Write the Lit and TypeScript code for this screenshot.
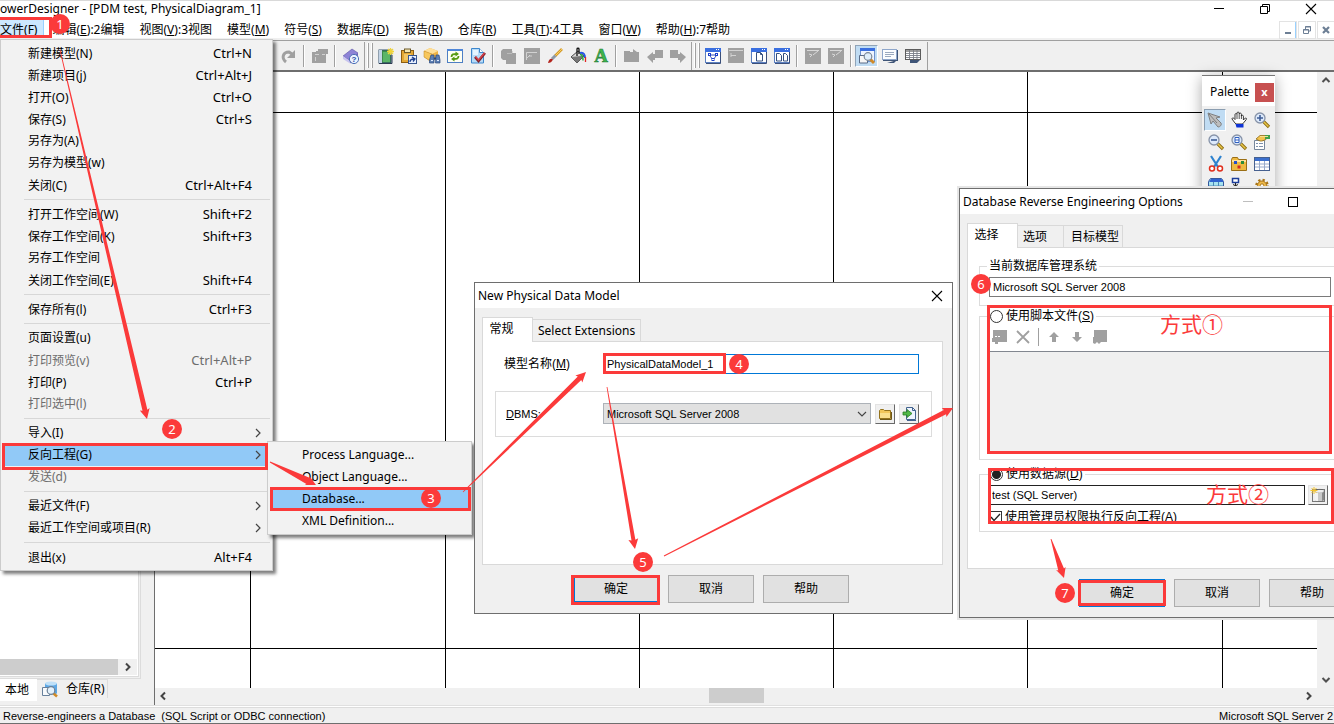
import { LitElement, html, svg, css, nothing } from "lit";
import { customElement } from "lit/decorators.js";
import { classMap } from "lit/directives/class-map.js";

/* ---------- icon drawings, all on a 16 x 16 grid ---------- */
const G = "#a0a0a0";
const windowFrame = svg`<rect x="0.5" y="0.5" width="15" height="14" fill="#fff" stroke="#5b7fc0"/><rect x="0" y="0" width="16" height="4" fill="#3a6fe0"/><rect x="11" y="1" width="1" height="1" fill="#fff"/><rect x="13" y="1" width="1" height="1" fill="#fff"/><path d="M15.5 4v11.5H1" fill="none" stroke="#3a4f7a"/>`;
const lens = (x: number, y: number) => svg`<path d="M${x + 3} ${y + 3}l6 6" stroke="#8a6a10" stroke-width="3.200"/><path d="M${x + 3} ${y + 3}l5.500 5.500" stroke="#e8c64a" stroke-width="1.500"/><circle cx="${x}" cy="${y}" r="5" fill="#dce9fb" stroke="#8793a8" stroke-width="1.300"/>`;
const cylinderStar = svg`<path d="M5 4v9c0 2 9 2 9 0V4z" fill="#c9c9c9"/><path d="M5 4v9c1 1 2 1.300 3 1.400V4z" fill="#f4f4f4"/><path d="M12 4v10c1-.2 2-.5 2-1V4z" fill="#8a8a8a"/><ellipse cx="9.500" cy="4" rx="4.500" ry="1.800" fill="#eee" stroke="#aaa" stroke-width=".5"/><rect x="2.500" y="2.500" width="12" height="12" fill="none" stroke="#000" stroke-dasharray="1 1"/><path d="M4 0v7M.5 3.500h7M1.500 1l5 5M6.500 1l-5 5" stroke="#f4c430"/>`;

const ICONS: Record<string, unknown> = {
  redo: svg`<path d="M5 14C0 10 2 4 8 4l3 2" fill="none" stroke="${G}" stroke-width="3"/><path d="M14 2v8H6z" fill="${G}"/>`,
  pasteOff: svg`<path d="M0 4h4V3h2V1h10v5h-2v9H0z" fill="${G}"/><path d="M3 6.500h4M3.500 9v4M10 6.500h3" stroke="#d0d0d0"/>`,
  help: svg`<path d="M0 8L9 1l6 4-8 8z" fill="#8d83d6" stroke="#5c53a5" stroke-width=".6"/><path d="M0 8l7 5v2.500L0 11z" fill="#c9c4ef"/><path d="M7 13l8-8v3l-8 7.500z" fill="#6d63bd"/><circle cx="11" cy="11" r="4.600" fill="#eaf2ff" stroke="#4e6fb5"/><text x="8.600" y="14" font-size="8" font-weight="700" font-family="Liberation Sans" fill="#2b4ea2">?</text>`,
  newProject: svg`<rect x="1" y="2" width="12" height="13" fill="#3e8b49" stroke="#31506e"/><rect x="1" y="2" width="3" height="13" fill="#c4d4e6"/><rect x="5" y="4" width="7" height="10" fill="#5bb567"/><path d="M1 15.500h13V7" fill="none" stroke="#2d3b52"/><path d="M12.500 0v7M9 3.500h7M10 1l5 5M15 1l-5 5" stroke="#f0d43a" stroke-width="1.300"/>`,
  paste: svg`<rect x=".5" y="2.500" width="12" height="12" fill="#e3a734" stroke="#8d5e12"/><rect x="3.500" y="1" width="6" height="3.500" fill="#f6e6b0" stroke="#6d5b2c"/><rect x="3" y="6" width="7" height="6" fill="#f2c766"/><rect x="7.500" y="7.500" width="8" height="8" fill="#e9f1ff" stroke="#35548f"/><path d="M9 14c0-3 2-3 4-3M11 9l3 2-2 2.500" fill="none" stroke="#1c3e8f" stroke-width="1.300"/>`,
  find: svg`<path d="M0 3l6-3 8 3v7l-7 4-7-5z" fill="#efb445"/><path d="M0 3l6-3 8 3-6 3z" fill="#ffe09a"/><path d="M0 3l8 3v8L0 9z" fill="#f7c75c" stroke="#bd8422" stroke-width=".5"/><path d="M7 7h3v8H5.500v-3zM12 7h3l1 5v3h-4.500z" fill="#5c7fb4" stroke="#28477c" stroke-width=".7"/><path d="M10 10.500h2" stroke="#28477c" stroke-width="2"/><path d="M7 12.500h2M13 12.500h2" stroke="#dce8fa"/>`,
  refresh: svg`<rect x=".5" y="1.500" width="15" height="13" fill="#fffff2" stroke="#4e7fc4"/><rect x="0" y="1" width="16" height="2" fill="#4f86d8"/><path d="M4.500 9c0-3 2-3 5-3M11.500 8c0 3-2 3-5 3" fill="none" stroke="#579b12" stroke-width="1.800"/><path d="M8.500 3.500L12 6 8.500 8.500zM7.500 8.500L4 11l3.500 2.500z" fill="#579b12"/>`,
  check: svg`<path d="M1.500.5h8l4 4v10.500h-12z" fill="#b7dbf7" stroke="#3d86cc"/><path d="M3 2h5v5H3z" fill="#e5f4ff"/><path d="M9.500.5v4h4" fill="#fff" stroke="#3d86cc"/><path d="M5 9l3.500 4L15 5" fill="none" stroke="#7d2028" stroke-width="2.600"/><path d="M5.500 8.500l3 3.500L14.500 5" fill="none" stroke="#d8414a" stroke-width="1.400"/>`,
  copyOff: svg`<path d="M0 3l2-2h9v4h4v11H5v-4H2l-2-2z" fill="${G}"/><path d="M6 5.500h5M11.500 3v2" stroke="#c8c8c8" stroke-width=".7"/>`,
  sheetOff: svg`<rect width="16" height="16" fill="${G}"/><path d="M2.500 12V4.500H13M5 8h3M3 10l3-3" fill="none" stroke="#d8d8d8" stroke-width=".9"/>`,
  brush: svg`<path d="M15 1L8 8" stroke="#d59a25" stroke-width="2.600"/><path d="M15 1L8 8" stroke="#f7ce62"/><path d="M8.500 7.500L5 11" stroke="#8d98a6" stroke-width="3"/><path d="M1 15c1-4 3-5 5-3.500C5 14 3 15 1 15z" fill="#b3231c"/>`,
  bucket: svg`<path d="M1 9l7-6 6 5-7 7z" fill="#d9d9d9" stroke="#444"/><path d="M1 9l10-1 3 0-7 7z" fill="#777"/><path d="M7 8V1c0-1 2-1 2 0v5" fill="none" stroke="#111" stroke-width="1.300"/><path d="M10 5c4-1 5 2 5 5" fill="none" stroke="#2457e6" stroke-width="2"/><path d="M10 6.500c2 0 3 2 3 6" fill="none" stroke="#24a83b" stroke-width="1.400"/><path d="M15.500 9v5" stroke="#e02626" stroke-width="1.300"/>`,
  fontA: svg`<text x="8" y="14" font-size="19" font-weight="700" text-anchor="middle" font-family="Liberation Serif" fill="#3fb54a" stroke="#24803a" stroke-width=".6">A</text>`,
  folderOff: svg`<path d="M0 3h6v1h3V1l4 3h2v10H0z" fill="${G}"/>`,
  leftOff: svg`<path d="M0 9l6-5v2h2V2h8v8h-8v2H6v3z" fill="${G}"/>`,
  rightOff: svg`<path d="M16 9l-6-5v2H8V2H0v8h8v2h2v3z" fill="${G}"/>`,
  diagram: svg`${windowFrame}<path d="M5 7h6M5 8l3 4 3-4" stroke="#3450b5" fill="none"/><rect x="3.500" y="5.500" width="2" height="2" fill="#fff" stroke="#1c3fcc"/><rect x="10.500" y="5.500" width="2" height="2" fill="#fff" stroke="#1c3fcc"/><rect x="7" y="10.500" width="2" height="2" fill="#fff" stroke="#1c3fcc"/>`,
  windowOff: svg`<rect y="0" width="16" height="15" fill="${G}"/><path d="M1 2.500h14M3 7.500h5M3 5v4" stroke="#d8d8d8" stroke-width=".9"/>`,
  page: svg`${windowFrame}<path d="M5.500 4.500h4l2 2v6.500h-6z" fill="#fff" stroke="#34507f"/><path d="M9.500 4.500v2h2" fill="none" stroke="#34507f"/>`,
  pages: svg`${windowFrame}<path d="M2.500 5.500h3l2 2v5.500h-5zM9.500 5.500h2l2 2v5.500h-4z" fill="#fff" stroke="#34507f"/>`,
  slashOff: svg`<rect width="16" height="16" fill="${G}"/><path d="M2 2.500h12M4 6l3 1-2 2M8 7l5-4" stroke="#d8d8d8" fill="none"/>`,
  preview: svg`<rect x="1.500" y=".5" width="14" height="13" fill="#eef4ff" stroke="#6d90cc"/><rect x="1" y="0" width="15" height="3" fill="#3a6fe0"/><path d="M.5 7.500h6l2 2V15h-8z" fill="#f6f6f6" stroke="#5a6c88"/><path d="M11 11l4 4" stroke="#d08a28" stroke-width="3"/><circle cx="9" cy="8.500" r="3.800" fill="#dfeefb" stroke="#7a8798" stroke-width="1.200"/>`,
  comment: svg`<rect x="1" y="2" width="15" height="11" fill="#3f5578"/><path d="M5 15h7l3-3" fill="#3f5578"/><rect x=".5" y="1.500" width="14" height="10" fill="#fbfdff" stroke="#8ea6ca"/><path d="M3 4.500h9M3 6.500h9M3 8.500h6" stroke="#9aa9bf"/>`,
  table: svg`<path d="M5 12h10l-3 3H5z" fill="#3f5578"/><rect x=".5" y="1.500" width="15" height="10" fill="#fff" stroke="#5c5c5c"/><rect x="1" y="2" width="14" height="2" fill="#9d9d9d"/><path d="M1 5.500h14M1 7.500h14M1 9.500h14M4.500 2v9M8.500 2v9M12 2v9" stroke="#7a7f88" stroke-width=".9"/>`,
  pointer: svg`<path d="M1 1l3 11 2-3 5 6c2 0 4-2 3-4L9 6l4-1z" fill="#bdbdbd" stroke="#777" stroke-width=".9"/><path d="M2 2l8 9" stroke="#7b7b7b"/>`,
  hand: svg`<path d="M4 11L1 7c0-1.500 1.500-1.500 3 .5V2.500c0-1.200 2-1.200 2 0V1c0-1.200 2.200-1.200 2.200 0v1c0-1.200 2.200-1.200 2.200.2V4c0-1 2-1 2 .2V8l2-2c1-.5 1.500 1 .5 2L12 11.500V12H5z" fill="#fff" stroke="#222" stroke-width=".9"/><path d="M6 3v4M8.200 2v5M10.400 3v4" stroke="#222" stroke-width=".8"/><path d="M4.500 12h8v3.500h-7z" fill="#0f34d6"/>`,
  zoomIn: svg`${lens(6, 6)}<path d="M3 6h6M6 3v6" stroke="#3f5e97" stroke-width="1.600"/>`,
  zoomOut: svg`${lens(6, 6)}<path d="M3 6h6" stroke="#3f5e97" stroke-width="1.600"/>`,
  zoomPage: svg`${lens(6, 6)}<path d="M4 3.500h4v5H4zM4 6h4" fill="#fff" stroke="#2e5fc0"/>`,
  props: svg`<path d="M.5 6.500h10v9H.5z" fill="#fff" stroke="#76879c"/><path d="M2 9.500h2M5 9.500h4M2 12.500h2M5 12.500h4" stroke="#7e91ad"/><path d="M2 5l4-3.500h6v4l-4 1.500H6z" fill="#f2c34f" stroke="#8d6a15" stroke-width=".8"/><path d="M11 1h5v4h-5z" fill="#3fa04a"/><path d="M6 2.500h8" stroke="#f7e08c"/>`,
  cut: svg`<path d="M3 0l7 11M13 0L6 11" stroke="#2f83cf" stroke-width="2.200"/><circle cx="4" cy="12.500" r="2.500" fill="#fff" stroke="#e0301e" stroke-width="1.500"/><circle cx="12" cy="12.500" r="2.500" fill="#fff" stroke="#e0301e" stroke-width="1.500"/>`,
  pkg: svg`<path d="M.5 3.500l1-2h5l1 2h8v11H.5z" fill="#eeb940" stroke="#9a6e15"/><path d="M1 4h14v2H1z" fill="#ffe09a"/><rect x="3" y="5" width="3" height="3" fill="#2350c8"/><rect x="10" y="5" width="3" height="3" fill="#2b8c3a"/><rect x="6.500" y="9.500" width="3" height="3" fill="#d22b20"/>`,
  tbl: svg`<rect x=".5" y="1.500" width="15" height="13" fill="#fff" stroke="#46608f"/><rect x="1" y="2" width="14" height="3" fill="#3b6fce"/><path d="M1 8h14M1 11h14M5.500 5v9M10.500 5v9" stroke="#98aacb"/>`,
  view: svg`<path d="M.5 3.500l2-3h11l2 3v12H.5z" fill="#a7e3ef" stroke="#34579c"/><path d="M1 4h14V2L13 1H3z" fill="#2f62cf"/><path d="M1 8h14M1 12h14M5.500 4v11M10.500 4v11" stroke="#4a86b5"/>`,
  ref: svg`<rect x="1.500" y=".5" width="6" height="4" fill="#fff" stroke="#1b3d99" stroke-width="1.500"/><path d="M4.500 5v7M2 9l5-2.500M2 6.500L7 9M4 12h5" stroke="#222" fill="none"/><rect x="9" y="9" width="6" height="5" fill="#3b8be0"/>`,
  gear: svg`<circle cx="8" cy="7.500" r="5.500" fill="none" stroke="#a87418" stroke-width="2.500" stroke-dasharray="2.200 2.100"/><circle cx="8" cy="7.500" r="4.500" fill="#edb94b" stroke="#a87418"/><circle cx="8" cy="7.500" r="1.700" fill="#fff" stroke="#a87418"/>`,
  repo: svg`<path d="M3 2v10c0 2 12 2 12 0V2z" fill="#5da7e4"/><ellipse cx="9" cy="2.500" rx="6" ry="2" fill="#bfe0f8"/><path d="M.5 6.500h7v8h-7z" fill="#f8fafc" stroke="#66809c"/><path d="M11 12l4 3.500" stroke="#d08a28" stroke-width="2.500"/><circle cx="9" cy="9.500" r="3.800" fill="#e4f1fb" stroke="#6b7f95" stroke-width="1.200"/>`,
  folder: svg`<path d="M2.500 12.500V4.500l1-1h3l1 1h6v8z" fill="#f1c65a" stroke="#94731d"/><path d="M3 7h10v5H3z" fill="#fadf8d"/><path d="M3 13.500h11.500V6" fill="none" stroke="#6f5717"/>`,
  importDoc: svg`<path d="M5.500 1.500h6l3 3v9h-9z" fill="#eef4ff" stroke="#42628f"/><path d="M11.500 1.500v3h3M6 14.500h9" fill="none" stroke="#42628f"/><path d="M2 6h4V3.500l5 4-5 4V9H2z" fill="#52b848" stroke="#2a7d24" stroke-width=".8"/>`,
  addOff: svg`<path d="M1 1h14v12H6v2H3v-2H0V9h1z" fill="${G}"/><path d="M3 7.500h2M6 7.500h2" stroke="#fff"/>`,
  delOff: svg`<path d="M2 2l12 12M14 2L2 14" stroke="${G}" stroke-width="1.800"/>`,
  upOff: svg`<path d="M8 3l5 5h-3v5H6V8H3z" fill="${G}"/>`,
  downOff: svg`<path d="M8 13L3 8h3V3h4v5h3z" fill="${G}"/>`,
  listOff: svg`<path d="M2 1h13v12H9l-2 2-2-2-2 2-2-1V8h1z" fill="${G}"/>`,
  cylinder: cylinderStar,
  min: svg`<path d="M3 7.500h10" stroke="#000"/>`,
  max: svg`<rect x="3.500" y="3.500" width="9" height="9" fill="none" stroke="#000"/>`,
  restore: svg`<path d="M3.500 5.500h7v7h-7zM5.500 5.500v-2h7v7h-2" fill="none" stroke="#000"/>`,
  close: svg`<path d="M3 3l10 10M13 3L3 13" stroke="#000" stroke-width="1.100"/>`,
  mdiMin: svg`<path d="M5 11h6" stroke="#6d7f95" stroke-width="2"/>`,
  mdiRestore: svg`<path d="M4.500 7.500h5v4h-5zM6.500 7V4.500h5v4.500H10M4 8h6M6 5h6" fill="none" stroke="#6d7f95"/>`,
  mdiClose: svg`<path d="M5 5l6 6M11 5l-6 6" stroke="#6d7f95" stroke-width="2.200"/>`,
  right: svg`<path d="M6 4l4 4-4 4" fill="none" stroke="#444" stroke-width="1.200"/>`,
  barRight: svg`<path d="M6 4.500L9.500 8 6 11.500" fill="none" stroke="#444" stroke-width="2"/>`,
  barLeft: svg`<path d="M10 4.500L6.500 8 10 11.500" fill="none" stroke="#444" stroke-width="2"/>`,
  barUp: svg`<path d="M4.500 10L8 6.500l3.500 3.500" fill="none" stroke="#505050" stroke-width="2"/>`,
  barDown: svg`<path d="M4.500 6L8 9.500 11.500 6" fill="none" stroke="#505050" stroke-width="2"/>`,
  chevron: svg`<path d="M4 6l4 4 4-4" fill="none" stroke="#444" stroke-width="1.100"/>`,
};

const icon = (name: string) =>
  html`<svg class="ic" width="16" height="16" viewBox="0 0 16 16" aria-hidden="true">${ICONS[name]}</svg>`;

const shared = css`
  * { box-sizing: border-box; }
  button, input, select { font: inherit; color: inherit; margin: 0; padding: 0; }
  button { background: none; border: 0; border-radius: 0; }
  .ic { display: block; flex: none; overflow: visible; }
  .push {
    flex: none; width: 86px; height: 28px; background: #e1e1e1; border: 1px solid #adadad;
    font: 12px/16px "Noto Sans", "Noto Sans CJK SC", sans-serif;
  }
  .push.default { border: 2px solid #0078d7; }
  .window {
    background: #f0f0f0; border: 1px solid #6e6e6e; color: #000;
    font: 11px/16px "Liberation Sans", "Noto Sans CJK SC", sans-serif;
  }
  .caption {
    display: flex; align-items: center; height: 25px; padding: 0 7px 0 3px; background: #fff;
    font: 12px/16px "Noto Sans", "Noto Sans CJK SC", sans-serif;
  }
  .caption h2 { flex: 1; margin: 0; font: inherit; white-space: nowrap; }
  .tabs { display: flex; align-items: flex-end; margin-bottom: -1px; position: relative; }
  .tab {
    height: 22px; margin-bottom: 1px; background: #f0f0f0; border: 1px solid #d9d9d9; border-width: 1px 1px 0 0;
    font: 12px/16px "Noto Sans", "Noto Sans CJK SC", sans-serif; white-space: nowrap;
  }
  .tab.on { width: 51px; height: 25px; margin: 0; padding: 0 12px 3px 0; background: #fff; border-width: 1px 1px 0 1px; }
  .sheet { background: #fff; border: 1px solid #d9d9d9; }
  .text { background: #fff; border: 1px solid #7a7a7a; border-radius: 0; padding: 0 3px; height: 20px; width: 100%; outline: 0; }
  .square {
    flex: none; width: 20px; height: 20px; display: grid; place-items: center; background: #f0f0f0;
    border: 1px solid; border-color: #e3e3e3 #696969 #696969 #e3e3e3;
  }
`;

/* ---------- drop-down menus ---------- */
type Entry = null | { label: string; key?: string; off?: boolean; sub?: boolean; on?: boolean };

const FILE_MENU: Entry[] = [
  { label: "新建模型(N)", key: "Ctrl+N" },
  { label: "新建项目(j)", key: "Ctrl+Alt+J" },
  { label: "打开(O)", key: "Ctrl+O" },
  { label: "保存(S)", key: "Ctrl+S" },
  { label: "另存为(A)" },
  { label: "另存为模型(w)" },
  { label: "关闭(C)", key: "Ctrl+Alt+F4" },
  null,
  { label: "打开工作空间(W)", key: "Shift+F2" },
  { label: "保存工作空间(K)", key: "Shift+F3" },
  { label: "另存工作空间" },
  { label: "关闭工作空间(E)", key: "Shift+F4" },
  null,
  { label: "保存所有(l)", key: "Ctrl+F3" },
  null,
  { label: "页面设置(u)" },
  { label: "打印预览(v)", key: "Ctrl+Alt+P", off: true },
  { label: "打印(P)", key: "Ctrl+P" },
  { label: "打印选中(l)", off: true },
  null,
  { label: "导入(I)", sub: true },
  { label: "反向工程(G)", sub: true, on: true },
  { label: "发送(d)", off: true },
  null,
  { label: "最近文件(F)", sub: true },
  { label: "最近工作空间或项目(R)", sub: true },
  null,
  { label: "退出(x)", key: "Alt+F4" },
];

const REVERSE_MENU: Entry[] = [
  { label: "Process Language..." },
  { label: "Object Language..." },
  { label: "Database...", on: true },
  { label: "XML Definition..." },
];

@customElement("pd-menu")
export class PdMenu extends LitElement {
  static properties = { entries: { attribute: false }, nested: { type: Boolean } };
  declare entries: Entry[];
  declare nested: boolean;

  static styles = [shared, css`
    :host { display: block; }
    .menu {
      padding: 2px; background: #f2f2f2; border: 1px solid #ccc;
      box-shadow: 3px 3px 3px rgba(0, 0, 0, 0.5);
      font: 12px/22px "Noto Sans", "Noto Sans CJK SC", sans-serif; color: #000;
    }
    .item { display: flex; align-items: baseline; width: 100%; height: 22px; padding: 0 4px 0 25px; text-align: left; white-space: nowrap; }
    .item .ic { align-self: center; }
    .nested .item { padding-left: 32px; }
    .item.on { background: #91c9f7; }
    .item.off { color: #6d6d6d; }
    .label { flex: 1; }
    .key { padding-right: 14px; font-size: 13px; }
    .rule { height: 1px; margin: 3px 0 3px 21px; border: 0; background: #d7d7d7; }
  `];

  render() {
    return html`<div class=${classMap({ menu: true, nested: this.nested })} role="menu">
      ${this.entries.map((e) => e === null
        ? html`<hr class="rule">`
        : html`<button class=${classMap({ item: true, on: !!e.on, off: !!e.off })} role="menuitem">
            <span class="label">${e.label}</span>
            ${e.key ? html`<span class="key">${e.key}</span>` : nothing}
            ${e.sub ? icon("right") : nothing}
          </button>`)}
    </div>`;
  }
}

/* ---------- New Physical Data Model ---------- */
@customElement("new-model-dialog")
export class NewModelDialog extends LitElement {
  static styles = [shared, css`
    :host { display: block; }
    .body { padding: 9px 9px 10px 7px; }
    .tab.ext { padding: 0 5px; }
    .sheet { height: 224px; padding: 12px 10px 0 12px; }
    .row { display: grid; grid-template-columns: 99px 1fr; align-items: center; padding: 0 13px 0 9px; }
    .row label { font-size: 12px; }
    .name { border-color: #0078d7; }
    .group { margin-top: 17px; padding: 11px 12px 12px 10px; border: 1px solid #dcdcdc; display: grid; grid-template-columns: 97px 1fr 20px 20px; column-gap: 4px; align-items: center; }
    .pick { position: relative; margin-left: -4px; }
    .pick select { display: block; appearance: none; width: 100%; height: 21px; padding: 0 3px; background: #e1e1e1; border: 1px solid #adb2b8; border-radius: 0; }
    .pick .ic { position: absolute; right: 1px; top: 3px; pointer-events: none; }
    .actions { display: flex; justify-content: center; gap: 9px; margin-top: 10px; padding-right: 3px; }
  `];

  render() {
    return html`<section class="window">
      <header class="caption"><h2>New Physical Data Model</h2><button aria-label="Close">${icon("close")}</button></header>
      <div class="body">
        <div class="tabs"><button class="tab on">常规</button><button class="tab ext">Select Extensions</button></div>
        <div class="sheet">
          <div class="row"><label for="name">模型名称(<u>M</u>)</label><input id="name" class="text name" value="PhysicalDataModel_1"></div>
          <div class="group">
            <label for="dbms"><u>D</u>BMS:</label>
            <div class="pick"><select id="dbms"><option>Microsoft SQL Server 2008</option></select>${icon("chevron")}</div>
            <button class="square" aria-label="Browse">${icon("folder")}</button>
            <button class="square" aria-label="Import">${icon("importDoc")}</button>
          </div>
        </div>
        <div class="actions"><button class="push default">确定</button><button class="push">取消</button><button class="push">帮助</button></div>
      </div>
    </section>`;
  }
}

/* ---------- Database Reverse Engineering Options ---------- */
@customElement("reverse-dialog")
export class ReverseDialog extends LitElement {
  static styles = [shared, css`
    :host { display: block; }
    .window { box-shadow: 0 0 0 2px #e6e6e6; }
    .caption { padding-right: 56px; }
    .caption .faint { opacity: 0.25; }
    .caption button + button { margin-left: 29px; }
    .body { padding: 9px 7px 10px; }
    .tab.mid { width: 46px; padding: 0 0 0 5px; text-align: left; }
    .tab.last { padding: 0 3px 0 7px; }
    .sheet { height: 322px; padding: 11px 9px 0 11px; }
    fieldset { display: block; min-width: 0; margin: 0; padding: 0 8px 0 9px; border: 1px solid #dcdcdc; }
    legend { padding: 0 2px; margin-left: -1px; height: 14px; line-height: 14px; display: flex; align-items: center; gap: 3px; }
    .current legend { margin-left: -2px; font-size: 12px; }
    .current { height: 47px; padding-top: 4px; }
    .script { height: 151px; margin-top: 3px; }
    .source { height: 65px; margin-top: 7px; }
    legend label, .admin label { font-size: 12px; white-space: nowrap; }
    input[type="radio"] { appearance: none; width: 13px; height: 13px; border: 1px solid #333; border-radius: 50%; background: #fff; }
    input[type="radio"]:checked { background: radial-gradient(circle, #222 0 4px, #fff 5px); }
    input[type="checkbox"] { width: 13px; height: 13px; appearance: none; border: 1px solid #333; background: #fff; }
    .box { position: relative; display: grid; width: 13px; height: 13px; }
    .box svg { position: absolute; inset: 0; pointer-events: none; }
    .tools { display: flex; align-items: center; gap: 7px; height: 28px; padding-left: 3px; }
    .tools .bar { width: 1px; height: 18px; background: #a0a0a0; }
    .list { height: 101px; background: #f0f0f0; border-top: 1px solid #828790; }
    .line { display: flex; gap: 3px; padding: 4px 3px 0 0; }
    .line .text { border-color: #222; padding: 0 2px; }
    .admin { display: flex; align-items: center; gap: 3px; height: 16px; margin-top: 4px; }
    .actions { display: flex; gap: 9px; margin-top: 10px; padding-left: 112px; }
  `];

  render() {
    return html`<section class="window">
      <header class="caption"><h2>Database Reverse Engineering Options</h2>
        <button class="faint" aria-label="Minimize">${icon("min")}</button><button aria-label="Maximize">${icon("max")}</button></header>
      <div class="body">
        <div class="tabs"><button class="tab on">选择</button><button class="tab mid">选项</button><button class="tab last">目标模型</button></div>
        <div class="sheet">
          <fieldset class="current"><legend>当前数据库管理系统</legend>
            <input class="text" aria-label="当前数据库管理系统" value="Microsoft SQL Server 2008"></fieldset>
          <fieldset class="script"><legend><input type="radio" name="mode" id="script"><label for="script">使用脚本文件(<u>S</u>)</label></legend>
            <div class="tools">
              <button aria-label="Add">${icon("addOff")}</button><button aria-label="Delete">${icon("delOff")}</button><span class="bar"></span>
              <button aria-label="Up">${icon("upOff")}</button><button aria-label="Down">${icon("downOff")}</button><button aria-label="Options">${icon("listOff")}</button>
            </div>
            <div class="list"></div>
          </fieldset>
          <fieldset class="source"><legend><input type="radio" name="mode" id="source" checked><label for="source">使用数据源(<u>D</u>)</label></legend>
            <div class="line"><input class="text" aria-label="使用数据源" value="test (SQL Server)"><button class="square" aria-label="Select data source">${icon("cylinder")}</button></div>
            <div class="admin"><span class="box"><input type="checkbox" id="admin" checked><svg width="13" height="13" viewBox="0 0 13 13"><path d="M2 6l3 3.500L11 3" fill="none" stroke="#222" stroke-width="1.300"/></svg></span><label for="admin">使用管理员权限执行反向工程(<u>A</u>)</label></div>
          </fieldset>
        </div>
        <div class="actions"><button class="push default">确定</button><button class="push">取消</button><button class="push">帮助</button></div>
      </div>
    </section>`;
  }
}

/* ---------- tool palette ---------- */
@customElement("tool-palette")
export class ToolPalette extends LitElement {
  static styles = [shared, css`
    :host { display: block; }
    .palette { background: #f0f0f0; border-top: 1px solid #777; box-shadow: 0 3px 14px rgba(0, 0, 0, 0.35); font: 12px/16px "Noto Sans", sans-serif; }
    header { display: flex; align-items: center; justify-content: space-between; height: 30px; padding: 2px 1px 0 8px; background: #fff; }
    .x { width: 19px; height: 19px; background: #c75050; color: #fff; font: bold 11px/16px "Noto Sans", sans-serif; }
    .tools { display: grid; grid-template-columns: repeat(3, 23px); grid-auto-rows: 22px; padding: 3px 2px; }
    .tools button { display: grid; place-items: center; }
    .tools .on { width: 22px; background: #c0dcf3; border: 1px solid; border-color: #8a9db0 #fff #fff #8a9db0; }
  `];

  render() {
    const tools = ["pointer", "hand", "zoomIn", "zoomOut", "zoomPage", "props", "cut", "pkg", "tbl", "view", "ref", "gear"];
    return html`<section class="palette">
      <header><span>Palette</span><button class="x" aria-label="Close palette">x</button></header>
      <div class="tools">${tools.map((t) => html`<button class=${t === "pointer" ? "on" : ""} aria-label=${t}>${icon(t)}</button>`)}</div>
    </section>`;
  }
}

/* ---------- walkthrough marks ---------- */
type Pt = [number, number];
const BADGES: Pt[] = [[60, 24], [172, 429], [431, 498], [739, 364], [643, 562], [981, 284], [1065, 593]];
const FRAMES = [
  [-3, 17, 55, 21], [2, 443, 266, 27], [270, 487, 201, 24], [603, 353, 123, 21],
  [571, 575, 89, 30], [987, 305, 345, 149], [988, 468, 346, 56], [1078, 580, 88, 26],
];
const ARROWS: [Pt, Pt, number][] = [
  [[60, 50], [147, 419], 5], [[270, 462], [316, 485], 7], [[463, 492], [586, 372], 5],
  [[607, 387], [635, 549], 4], [[664, 556], [953, 408], 5], [[1051, 539], [1064, 578], 6],
];

/* A shaft that widens from a point to w pixels, ending in a triangular head. */
function arrowPath([x0, y0]: Pt, [x1, y1]: Pt, w: number): string {
  const len = Math.hypot(x1 - x0, y1 - y0);
  const ux = (x1 - x0) / len, uy = (y1 - y0) / len;
  const at = (d: number, side: number) => `${(x1 - ux * d - uy * side).toFixed(1)} ${(y1 - uy * d + ux * side).toFixed(1)}`;
  return `M${at(len, 0.4)}L${at(9, w / 2)}L${at(10, 5)}L${x1} ${y1}L${at(10, -5)}L${at(9, -w / 2)}L${at(len, -0.4)}Z`;
}

const MENUS: [string, string, string][] = [
  ["文件", "F", ""], ["编辑", "E", ":2编辑"], ["视图", "V", ":3视图"], ["模型", "M", ""], ["符号", "S", ""],
  ["数据库", "D", ""], ["报告", "R", ""], ["仓库", "R", ""], ["工具", "T", ":4工具"], ["窗口", "W", ""], ["帮助", "H", ":7帮助"],
];

const TOOLBAR = "redo | pasteOff | help || newProject paste find refresh check | copyOff sheetOff brush bucket fontA | folderOff leftOff rightOff || diagram windowOff page pages | slashOff slashOff | preview comment table".split(" ");

@customElement("app-root")
export class AppRoot extends LitElement {
  static styles = [shared, css`
    :host {
      display: flex; flex-direction: column; position: relative; height: 100vh; overflow: hidden; box-sizing: border-box;
      background: #fff; border-top: 1px solid #d9d9d9; color: #000;
      font: 12px/16px "Noto Sans", "Noto Sans CJK SC", sans-serif;
    }
    .title { display: flex; height: 16px; align-items: center; padding-right: 15px; white-space: nowrap; }
    .title h1 { flex: 1; margin: 0; font: inherit; }
    .title button + button { margin-left: 30px; }
    .menubar { display: flex; align-items: flex-end; height: 23px; border-bottom: 2px solid #f0f0f0; }
    .menubar button { height: 18px; padding: 2px 7px 0 8px; white-space: nowrap; }
    .menubar button:first-child { padding: 2px 6px 0 0; background: #cce8ff; border-right: 1px solid #99d1ff; }
    .mdi { display: flex; gap: 3px; margin-left: auto; }
    .menubar .mdi button { width: 16px; height: 16px; padding: 0; background: #fff; outline: 1px solid #e3e3e3; }
    .toolbar { display: flex; align-items: center; height: 32px; padding-left: 277px; background: #f0f0f0; border-top: 1px solid #a0a0a0; border-bottom: 2px solid #6e6e6e; }
    .toolbar button { display: grid; place-items: center; flex: none; width: 23px; height: 22px; }
    .toolbar .on { background: #c0dcf3; border: 1px solid; border-color: #90a4b8 #fff #fff #90a4b8; }
    .bar { flex: none; width: 2px; height: 22px; margin: 0 3px; background: #a0a0a0; border-right: 1px solid #fff; }
    .grip { flex: none; width: 10px; height: 28px; margin: 0 0 0 2px; border: solid #a0a0a0; border-width: 0 0 0 1px; display: flex; gap: 2px; align-items: center; padding-left: 2px; }
    .grip i { width: 2px; height: 25px; background: #fff; border-right: 1px solid #a0a0a0; }
    .end { width: 1px; height: 28px; margin-left: 3px; background: #a0a0a0; }
    .main { flex: 1; min-height: 0; display: grid; grid-template-columns: 155px 1fr; }
    .side { display: flex; flex-direction: column; background: #f0f0f0; border-right: 1px solid #6e6e6e; }
    .tree { flex: 1; display: flex; align-items: flex-end; margin-right: 13px; padding: 0 1px 1px 0; border: solid #dcdcdc; border-width: 0 1px 1px 0; }
    .leaf { flex: 1; align-self: stretch; display: flex; align-items: flex-end; background: #fff; border: solid #dcdcdc; border-width: 0 1px 1px 0; padding: 0 1px 1px 0; }
    .hbar { flex: 1; display: flex; height: 16px; background: #f0f0f0; }
    .hbar .thumb { background: #cdcdcd; }
    .tree .thumb { width: 118px; margin-right: 2px; }
    .sidetabs { display: flex; height: 26px; }
    .sidetabs button { height: 19px; display: flex; align-items: center; }
    .sidetabs .on { width: 37px; height: 22px; padding-left: 5px; background: #fff; }
    .sidetabs .repo { gap: 8px; padding: 0 2px 0 5px; border: solid #dcdcdc; border-width: 1px 1px 0 0; }
    .work { display: grid; grid-template: 1fr 17px / 1fr 17px; min-width: 0; }
    .sheet { border: 0; width: 100%; height: 100%; display: block; }
    .vbar { display: flex; flex-direction: column; justify-content: space-between; align-items: center; background: #f0f0f0; }
    .work .hbar { height: 17px; justify-content: space-between; }
    .work .thumb { width: 55px; height: 15px; }
    .status { display: flex; justify-content: space-between; height: 19px; padding: 2px 1px 0 3px; background: #f0f0f0; border-top: 1px solid #e0e0e0; border-bottom: 1px solid #6e6e6e; font: 11px/16px "Liberation Sans", sans-serif; white-space: pre; box-shadow: inset 0 1px #fff, inset 0 2px #dcdcdc; }
    .float { position: absolute; }
    .file { left: 0; top: 38px; width: 273px; }
    .reverse { left: 267px; top: 440px; width: 205px; }
    .pal { left: 1202px; top: 74px; width: 73px; }
    .new { left: 474px; top: 281px; width: 479px; }
    .opts { left: 959px; top: 187px; width: 399px; }
    .marks { position: absolute; left: 0; top: -1px; pointer-events: none; }
    .note { position: absolute; color: #fb3a3a; font: 21px/30px "Noto Sans CJK SC", sans-serif; }
    .n1 { left: 1160px; top: 307px; }
    .n2 { left: 1206px; top: 477px; }
  `];

  render() {
    return html`
      <header class="title"><h1>owerDesigner - [PDM test, PhysicalDiagram_1]</h1>
        <button aria-label="Minimize">${icon("min")}</button><button aria-label="Restore">${icon("restore")}</button><button aria-label="Close">${icon("close")}</button></header>
      <nav class="menubar">
        ${MENUS.map(([t, k, s]) => html`<button>${t}(<u>${k}</u>)${s}</button>`)}
        <div class="mdi"><button aria-label="Minimize diagram">${icon("mdiMin")}</button><button aria-label="Restore diagram">${icon("mdiRestore")}</button><button aria-label="Close diagram">${icon("mdiClose")}</button></div>
      </nav>
      <div class="toolbar">
        ${TOOLBAR.map((t) => t === "|" ? html`<span class="bar"></span>` : t === "||" ? html`<span class="grip"><i></i><i></i></span>`
          : html`<button class=${t === "preview" ? "on" : ""} aria-label=${t}>${icon(t)}</button>`)}
        <span class="end"></span>
      </div>
      <main class="main">
        <aside class="side">
          <div class="tree"><div class="leaf"><div class="hbar"><div class="thumb"></div>${icon("barRight")}</div></div></div>
          <div class="sidetabs"><button class="on">本地</button><button class="repo">${icon("repo")}<span>仓库(R)</span></button></div>
        </aside>
        <div class="work">
          <svg class="sheet" aria-hidden="true"><path shape-rendering="crispEdges" stroke="#000" fill="none"
            d="M95.500 0V2000M290.500 0V2000M484.500 0V2000M678.500 0V2000M872.500 0V2000M1067.500 0V2000M0 40.500H4000M0 576.500H4000"/></svg>
          <div class="vbar">${icon("barUp")}${icon("barDown")}</div>
          <div class="hbar">${icon("barLeft")}<div class="thumb"></div>${icon("barRight")}</div>
          <div class="vbar"></div>
        </div>
      </main>
      <footer class="status"><span>Reverse-engineers a Database  (SQL Script or ODBC connection)</span><span>Microsoft SQL Server 2</span></footer>

      <tool-palette class="float pal"></tool-palette>
      <pd-menu class="float file" .entries=${FILE_MENU}></pd-menu>
      <pd-menu class="float reverse" nested .entries=${REVERSE_MENU}></pd-menu>
      <new-model-dialog class="float new"></new-model-dialog>
      <reverse-dialog class="float opts"></reverse-dialog>

      <svg class="marks" width="1334" height="724" viewBox="0 0 1334 724" aria-hidden="true">
        ${FRAMES.map(([x, y, w, h]) => svg`<rect x=${x + 1.5} y=${y + 1.5} width=${w - 3} height=${h - 3} fill="none" stroke="#fb3a3a" stroke-width="3"/>`)}
        ${ARROWS.map(([a, b, w]) => svg`<path d=${arrowPath(a, b, w)} fill="#fb3a3a"/>`)}
        ${BADGES.map(([x, y], i) => svg`<circle cx=${x} cy=${y} r="10" fill="#fb3a3a"/><text x=${x} y=${y + 5} text-anchor="middle" font-family="Noto Sans" font-size="13" fill="#fff">${i + 1}</text>`)}
      </svg>
      <span class="note n1">方式①</span><span class="note n2">方式②</span>
    `;
  }
}
